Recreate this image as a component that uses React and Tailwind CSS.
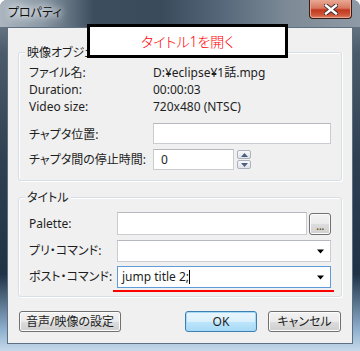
const label = "text-[#1e1e1e]";

function Group({ title, className, children }) {
  return (
    <div className={"relative border border-[#d5dfe5] rounded-[3px] shadow-[inset_1px_1px_0_#fff,1px_1px_0_#fff] " + className}>
      <span className="absolute -top-[9px] left-[6px] px-[2px] bg-[#f0f0f0] leading-[17px] text-[#1e1e1e]">{title}</span>
      {children}
    </div>
  );
}

function Arrow() {
  return (
    <svg width="8" height="5" viewBox="0 0 8 5" className="ml-auto mr-[5px]">
      <path d="M0 0.5h7l-3.5 4z" fill="#000" />
    </svg>
  );
}

function Spin() {
  return (
    <div className="ml-[3px] flex flex-col gap-[1px] pt-[1px]">
      {[0, 1].map((i) => (
        <div key={i} className="w-[14px] h-[9px] border border-[#a9b2bd] rounded-[2px] bg-[linear-gradient(180deg,#f7f8fa,#dfe3e8)] flex items-center justify-center">
          <svg width="7" height="4" viewBox="0 0 7 4">
            <path d={i === 0 ? "M0 4h7L3.5 0z" : "M0 0h7L3.5 4z"} fill="#4b5f80" />
          </svg>
        </div>
      ))}
    </div>
  );
}

function Btn({ children, className, primary }) {
  return (
    <div
      className={
        "h-[21px] rounded-[3px] border flex items-center justify-center text-[#1e1e1e] " +
        (primary
          ? "border-[#3c7fb1] shadow-[inset_0_0_0_1px_#a7daf6] bg-[linear-gradient(180deg,#eaf6fd_0%,#d9f0fc_50%,#bee6fd_51%,#a7d9f5_100%)] "
          : "border-[#707070] shadow-[inset_0_0_0_1px_#fcfcfc] bg-[linear-gradient(180deg,#f2f2f2_0%,#ebebeb_50%,#dddddd_51%,#cfcfcf_100%)] ") +
        className
      }
    >
      {children}
    </div>
  );
}

export default function App() {
  return (
    <div className="relative w-[360px] h-[351px] overflow-hidden rounded-t-[7px] bg-[linear-gradient(180deg,#7d8a96_0%,#4b5b6b_15%,#2f4052_45%,#1f3246_78%,#8fb0cf_94%,#c6d9ea_100%)] font-['Noto_Sans','Noto_Sans_CJK_JP',sans-serif] [font-feature-settings:'palt'] text-[12px]">
      {/* title bar */}
      <div className="h-[27px] flex items-start bg-[linear-gradient(90deg,#aab5bf_0%,#8997a4_12%,#3c4d5e_26%,#3a4b5c_45%,#56687a_62%,#7d8b97_80%,#8e9aa5_100%)]">
        <span className="ml-[8px] mt-[4px] leading-[17px] text-[12px] text-[#101010] [text-shadow:0_0_6px_#fff,0_0_10px_#fff,0_0_12px_#e8eef2]">
          プロパティ
        </span>
        <div className="ml-auto mr-[8px] w-[43px] h-[19px] rounded-b-[4px] border border-t-0 border-[#3b1d18] shadow-[inset_0_0_0_1px_#e8a58f] bg-[linear-gradient(180deg,#e9a996_0%,#d7775f_45%,#c2381e_55%,#d0583c_85%,#e08a6c_100%)] flex items-center justify-center">
          <svg width="14" height="11" viewBox="0 0 14 11">
            <path d="M2 1.5l10 8M12 1.5l-10 8" stroke="#3a2a2a" strokeWidth="4.2" strokeLinecap="square" />
            <path d="M2 1.5l10 8M12 1.5l-10 8" stroke="#fff" strokeWidth="2.4" strokeLinecap="square" />
          </svg>
        </div>
      </div>

      {/* client area */}
      <div className="ml-[7px] w-[346px] h-[317px] border border-[#5d6f82] bg-[#f0f0f0] px-[10px] pt-[24px]">
        <Group title="映像オブジェクト" className="h-[129px] pl-[10px] pt-[12px]">
          <div className="flex h-[16px] items-center">
            <span className={"w-[124px] " + label}>ファイル名:</span>
            <span className={label}>D:¥eclipse¥1話.mpg</span>
          </div>
          <div className="flex h-[17px] items-center">
            <span className={"w-[124px] " + label}>Duration:</span>
            <span className={label}>00:00:03</span>
          </div>
          <div className="flex h-[17px] items-center">
            <span className={"w-[124px] " + label}>Video size:</span>
            <span className={label}>720x480 (NTSC)</span>
          </div>
          <div className="flex h-[21px] items-center mt-[8px]">
            <span className={"w-[124px] pt-[3px] " + label}>チャプタ位置:</span>
            <div className="w-[178px] h-[21px] bg-white border border-[#c9cdd2] border-t-[#b5b9be]" />
          </div>
          <div className="flex h-[21px] items-start mt-[5px]">
            <span className={"w-[124px] leading-[21px] " + label}>チャプタ間の停止時間:</span>
            <div className="w-[81px] h-[21px] bg-white border border-[#c9cdd2] border-t-[#b5b9be] flex items-center pl-[7px] text-[#1e1e1e]">
              0
            </div>
            <Spin />
          </div>
        </Group>

        <Group title="タイトル" className="h-[100px] mt-[16px] pl-[10px] pt-[14px]">
          <div className="flex h-[23px] items-center">
            <span className={"w-[88px] " + label}>Palette:</span>
            <div className="w-[190px] h-[23px] bg-white border border-[#c9cdd2] border-t-[#b5b9be]" />
            <Btn className="ml-[2px] w-[22px] !h-[22px] items-end pb-[4px]">
              <span className="leading-[8px] text-[#6b4a10] tracking-[-0.5px]">...</span>
            </Btn>
          </div>
          <div className="flex h-[22px] items-center mt-[5px]">
            <span className={"w-[88px] " + label}>プリ・コマンド:</span>
            <div className="w-[214px] h-[22px] bg-white border border-[#c9cdd2] border-t-[#b5b9be] flex items-center">
              <Arrow />
            </div>
          </div>
          <div className="flex h-[22px] items-center mt-[4px]">
            <span className={"w-[88px] " + label}>ポスト・コマンド:</span>
            <div className="w-[214px] h-[22px] bg-white border border-[#5d9bd9] flex items-center pl-[4px] text-[#1e1e1e]">
              <span>jump title 2;</span>
              <span className="w-[1px] h-[14px] bg-black" />
              <Arrow />
            </div>
          </div>
          <div className="ml-[84px] mt-[2px] w-[221px] h-[2px] bg-[#ff0000]" />
        </Group>

        <div className="flex mt-[14px] pr-[1px]">
          <Btn className="w-[102px] ml-[1px]">音声/映像の設定</Btn>
          <Btn primary className="w-[72px] ml-auto">OK</Btn>
          <Btn className="w-[73px] ml-[11px]">キャンセル</Btn>
        </div>
      </div>

      {/* annotation box */}
      <div className="absolute left-[87px] top-[24px] w-[201px] h-[34px] border-[3px] border-black bg-white flex items-center justify-center text-[#ff0000] text-[14px] font-light">
        タイトル1を開く
      </div>
    </div>
  );
}
